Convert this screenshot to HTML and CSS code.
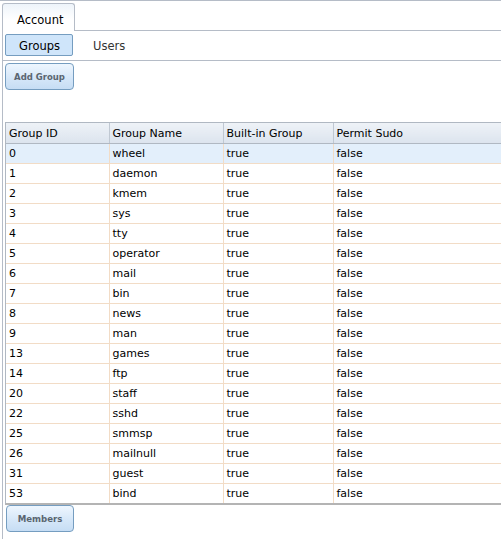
FILE: index.html
```html
<!DOCTYPE html>
<html>
<head>
<meta charset="utf-8">
<link rel="stylesheet" href="styles.css">
</head>
<body>
<div class="tabstrip">
  <div class="tab">Account</div>
  <div class="tabfill"></div>
</div>
<div class="pane">
  <div class="subtabs">
    <div class="subtab active">Groups</div>
    <div class="subtab">Users</div>
  </div>
  <div class="toolbar">
    <div class="btn">Add Group</div>
  </div>
  <div class="gridwrap">
    <table class="grid">
      <colgroup>
        <col class="c1"><col class="c2"><col class="c3"><col class="c4">
      </colgroup>
      <thead>
        <tr><th>Group ID</th><th>Group Name</th><th>Built-in Group</th><th>Permit Sudo</th></tr>
      </thead>
      <tbody>
        <tr class="sel"><td>0</td><td>wheel</td><td>true</td><td>false</td></tr>
        <tr><td>1</td><td>daemon</td><td>true</td><td>false</td></tr>
        <tr><td>2</td><td>kmem</td><td>true</td><td>false</td></tr>
        <tr><td>3</td><td>sys</td><td>true</td><td>false</td></tr>
        <tr><td>4</td><td>tty</td><td>true</td><td>false</td></tr>
        <tr><td>5</td><td>operator</td><td>true</td><td>false</td></tr>
        <tr><td>6</td><td>mail</td><td>true</td><td>false</td></tr>
        <tr><td>7</td><td>bin</td><td>true</td><td>false</td></tr>
        <tr><td>8</td><td>news</td><td>true</td><td>false</td></tr>
        <tr><td>9</td><td>man</td><td>true</td><td>false</td></tr>
        <tr><td>13</td><td>games</td><td>true</td><td>false</td></tr>
        <tr><td>14</td><td>ftp</td><td>true</td><td>false</td></tr>
        <tr><td>20</td><td>staff</td><td>true</td><td>false</td></tr>
        <tr><td>22</td><td>sshd</td><td>true</td><td>false</td></tr>
        <tr><td>25</td><td>smmsp</td><td>true</td><td>false</td></tr>
        <tr><td>26</td><td>mailnull</td><td>true</td><td>false</td></tr>
        <tr><td>31</td><td>guest</td><td>true</td><td>false</td></tr>
        <tr><td>53</td><td>bind</td><td>true</td><td>false</td></tr>
      </tbody>
    </table>
  </div>
  <div class="footer">
    <div class="btn btn2">Members</div>
  </div>
</div>
</body>
</html>
```

FILE: styles.css
```css
html, body {
  margin: 0;
  padding: 0;
  background: #fff;
  overflow: hidden;
}
body {
  font-family: "DejaVu Sans", Verdana, sans-serif;
  font-size: 11px;
  color: #000;
  width: 501px;
  height: 539px;
}
.tabstrip {
  display: flex;
  align-items: flex-end;
  height: 31px;
  border-top: 1px solid #b5bcc7;
  box-sizing: border-box;
  padding-left: 2px;
}
.tab {
  width: 73px;
  height: 28px;
  box-sizing: border-box;
  border: 1px solid #b5bcc7;
  border-bottom: none;
  border-radius: 3px 3px 0 0;
  background: linear-gradient(#eef4fa, #ffffff 60%);
  padding: 9px 0 0 14px;
  font-size: 11.5px;
}
.tabfill {
  flex: 1;
  border-bottom: 1px solid #b5bcc7;
}
.pane {
  margin-left: 2px;
  border-left: 1px solid #b5bcc7;
  height: 508px;
}
.subtabs {
  display: flex;
  align-items: center;
  height: 30px;
  border-bottom: 1px solid #b5bcc7;
  box-sizing: border-box;
  padding: 2px 0 3px 2px;
  gap: 6px;
}
.subtab {
  height: 22px;
  box-sizing: border-box;
  padding: 4px 13px 0 13px;
  font-size: 11.5px;
  color: #333;
  border: 1px solid transparent;
}
.subtab.active {
  width: 68px;
  padding-left: 13px;
  background: #cfe5fa;
  border: 1px solid #759dc0;
  border-radius: 2px;
  color: #000;
}
.toolbar {
  padding: 2px 0 0 2px;
  height: 61px;
  box-sizing: border-box;
}
.btn {
  width: 69px;
  height: 27px;
  box-sizing: border-box;
  border: 1px solid #759dc0;
  border-radius: 4px;
  background: linear-gradient(#eef6fe, #d4e6f8 60%, #c6ddf4);
  color: #5a6570;
  font-weight: bold;
  font-size: 8.5px;
  display: flex;
  align-items: center;
  justify-content: center;
}
.gridwrap {
  margin-left: 2px;
  width: 510px;
  border-left: 1px solid #b0b8c2;
  border-top: 1px solid #b0b8c2;
  border-bottom: 2px solid #b4b4b4;
}
.grid {
  border-collapse: collapse;
  table-layout: fixed;
  width: 498px;
}
.c1 { width: 103px; }
.c2 { width: 114px; }
.c3 { width: 110px; }
.c4 { width: 171px; }
.grid th {
  height: 20px;
  text-align: left;
  font-weight: normal;
  padding: 0 0 0 3px;
  background: linear-gradient(#eef2f7, #dce4ee);
  border-right: 1px solid #c0c8d2;
  border-bottom: 1px solid #b0b8c2;
  font-size: 11px;
}
.grid td {
  height: 19px;
  padding: 0 0 0 3px;
  border-right: 1px solid #f2dcc6;
  border-bottom: 1px solid #f2dcc6;
  white-space: nowrap;
}
.grid tr:last-child td { border-bottom: none; }
.grid tr.sel td {
  background: #e3effb;
}
.footer {
  padding: 0 0 0 3px;
}
.btn2 {
  width: 68px;
  font-size: 8.6px;
}
```
